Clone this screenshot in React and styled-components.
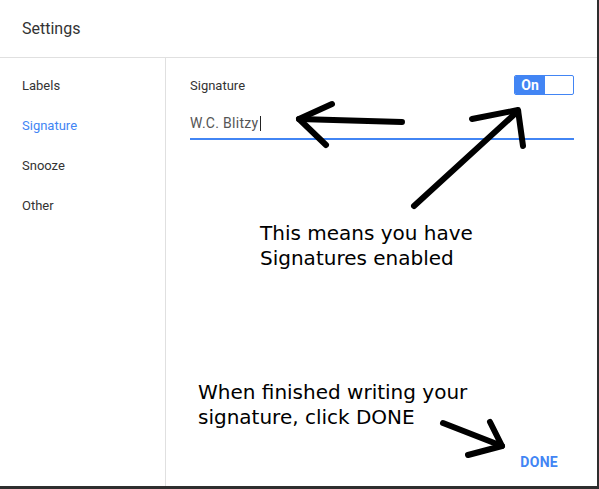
import React from 'react';
import styled, { createGlobalStyle } from 'styled-components';

const GlobalStyle = createGlobalStyle`
  html, body {
    margin: 0;
    padding: 0;
    background: #2e2e2e;
  }
  body {
    width: 599px;
    height: 489px;
    overflow: hidden;
  }
`;

const Dialog = styled.div`
  position: relative;
  width: 597px;
  height: 486px;
  background: #fff;
  display: flex;
  flex-direction: column;
  font-family: Roboto, "Liberation Sans", Arial, sans-serif;
  color: #333;
`;

const Header = styled.div`
  height: 57px;
  border-bottom: 1px solid #e0e0e0;
  display: flex;
  align-items: center;
  padding-left: 22px;
  font-size: 16px;
  color: #333;
`;

const Body = styled.div`
  flex: 1;
  display: flex;
  min-height: 0;
`;

const Sidebar = styled.ul`
  width: 143px;
  margin: 0;
  padding: 8px 0 0 22px;
  list-style: none;
  border-right: 1px solid #e0e0e0;
`;

const SidebarItem = styled.li`
  height: 40px;
  line-height: 40px;
  font-size: 13px;
  color: ${p => (p.active ? '#4285f4' : '#333')};
`;

const Content = styled.div`
  flex: 1;
  display: flex;
  flex-direction: column;
  padding: 17px 23px 6px 24px;
`;

const Row = styled.div`
  height: 20px;
  display: flex;
  align-items: center;
  justify-content: space-between;
  font-size: 13px;
`;

const Toggle = styled.div`
  width: 60px;
  height: 20px;
  box-sizing: border-box;
  border: 1px solid #4285f4;
  border-radius: 2px;
  display: flex;
  overflow: hidden;
`;

const ToggleOn = styled.div`
  width: 30px;
  background: #4285f4;
  color: #fff;
  font-weight: bold;
  font-size: 14px;
  display: flex;
  align-items: center;
  justify-content: center;
`;

const Input = styled.div`
  margin-top: 13px;
  height: 30px;
  border-bottom: 2px solid #4285f4;
  display: flex;
  align-items: center;
  font-size: 14px;
  letter-spacing: 0.3px;
  color: #555;
`;

const Caret = styled.span`
  display: inline-block;
  width: 1px;
  height: 15px;
  background: #222;
  margin-left: 1px;
`;

const Caption = styled.div`
  margin-left: ${p => p.indent}px;
  margin-top: ${p => p.top || 0}px;
  margin-bottom: ${p => p.bottom || 0}px;
  font-family: "DejaVu Sans", Verdana, sans-serif;
  font-size: 20px;
  line-height: 25px;
  color: #000;
`;

const Spacer = styled.div`
  flex: 1;
`;

const Footer = styled.div`
  display: flex;
  justify-content: flex-end;
`;

const DoneButton = styled.button`
  height: 36px;
  border: none;
  background: none;
  padding: 0 16px 0 0;
  font-family: Roboto, "Liberation Sans", Arial, sans-serif;
  font-weight: bold;
  font-size: 14px;
  letter-spacing: 0.3px;
  color: #4285f4;
`;

const Arrows = styled.svg`
  position: absolute;
  left: 0;
  top: 0;
  pointer-events: none;
`;

export default function App() {
  return (
    <>
      <GlobalStyle />
      <Dialog>
        <Header>Settings</Header>
        <Body>
          <Sidebar>
            <SidebarItem>Labels</SidebarItem>
            <SidebarItem active>Signature</SidebarItem>
            <SidebarItem>Snooze</SidebarItem>
            <SidebarItem>Other</SidebarItem>
          </Sidebar>
          <Content>
            <Row>
              <span>Signature</span>
              <Toggle>
                <ToggleOn>On</ToggleOn>
              </Toggle>
            </Row>
            <Input>
              W.C. Blitzy<Caret />
            </Input>
            <Caption indent={70} top={81}>
              This means you have<br />Signatures enabled
            </Caption>
            <Spacer />
            <Caption indent={8} bottom={14}>
              When finished writing your<br />signature, click DONE
            </Caption>
            <Footer>
              <DoneButton>DONE</DoneButton>
            </Footer>
          </Content>
        </Body>
        <Arrows width="597" height="486" viewBox="0 0 597 486">
          <g stroke="#000" strokeWidth="6" strokeLinecap="round" strokeLinejoin="round" fill="none">
            <path d="M402 122 L299 119" />
            <path d="M332 104 L299 119 L326 145" />
            <path d="M414 206 L518 111" />
            <path d="M472 119 L518 110 L523 146" />
            <path d="M443 423 L502 446" />
            <path d="M490 422 L502 446 L468 455" />
          </g>
        </Arrows>
      </Dialog>
    </>
  );
}
